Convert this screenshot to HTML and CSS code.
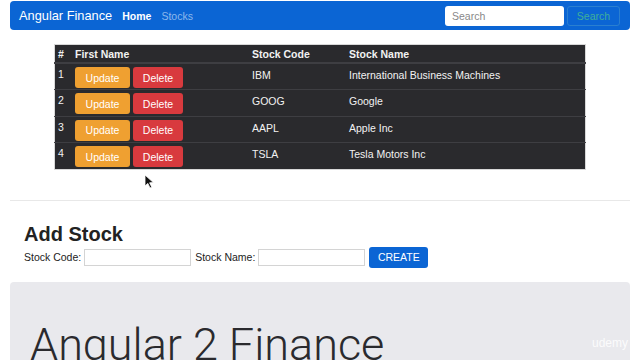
FILE: index.html
```html
<!DOCTYPE html>
<html>
  <head>
    <title>Angular Finance</title>
    <link rel="stylesheet" href="styles.css">
  </head>
  <body>
    <nav class="navbar">
      <a class="brand">Angular Finance</a>
      <a class="nav-link active">Home</a>
      <a class="nav-link">Stocks</a>
      <form class="search">
        <input class="search-input" type="text" placeholder="Search">
        <button class="search-btn" type="button">Search</button>
      </form>
    </nav>

    <div class="table-wrap">
      <table class="stocks">
        <thead>
          <tr>
            <th class="col-num">#</th>
            <th class="col-first">First Name</th>
            <th class="col-code">Stock Code</th>
            <th>Stock Name</th>
          </tr>
        </thead>
        <tbody>
          <tr>
            <td>1</td>
            <td><button class="btn btn-update">Update</button><button class="btn btn-delete">Delete</button></td>
            <td>IBM</td>
            <td>International Business Machines</td>
          </tr>
          <tr>
            <td>2</td>
            <td><button class="btn btn-update">Update</button><button class="btn btn-delete">Delete</button></td>
            <td>GOOG</td>
            <td>Google</td>
          </tr>
          <tr>
            <td>3</td>
            <td><button class="btn btn-update">Update</button><button class="btn btn-delete">Delete</button></td>
            <td>AAPL</td>
            <td>Apple Inc</td>
          </tr>
          <tr>
            <td>4</td>
            <td><button class="btn btn-update">Update</button><button class="btn btn-delete">Delete</button></td>
            <td>TSLA</td>
            <td>Tesla Motors Inc</td>
          </tr>
        </tbody>
      </table>
    </div>

    <hr class="divider">

    <section class="add-stock">
      <h2>Add Stock</h2>
      <form class="add-form">
        <label>Stock Code:</label>
        <input type="text">
        <label>Stock Name:</label>
        <input type="text">
        <button class="btn-create" type="button">CREATE</button>
      </form>
    </section>

    <div class="jumbotron">
      <h1>Angular 2 Finance</h1>
      <span class="watermark">udemy</span>
    </div>

    <svg class="cursor" width="12" height="16" viewBox="0 0 12 16">
      <path d="M1 1 L1 12 L3.8 9.4 L6 14 L7.8 13.2 L5.6 8.8 L9.4 8.6 Z" fill="#111" stroke="#fff" stroke-width="0.8"/>
    </svg>
  </body>
</html>
```
FILE: styles.css
```css
body {
  margin: 0;
  padding: 0 10px;
  font-family: "Liberation Sans", Arial, sans-serif;
  color: #222;
  background: #fff;
  overflow: hidden;
}

.navbar {
  display: flex;
  align-items: center;
  height: 29px;
  margin-top: 1px;
  padding: 0 10px 0 9px;
  background-color: #0b65d4;
  border-radius: 4px;
}
  .brand {
    color: #fff;
    font-size: 12.8px;
    margin-right: 10px;
  }
  .nav-link {
    color: #8cb8ec;
    font-size: 10.5px;
    margin-right: 10px;
  }
  .nav-link.active {
    color: #fff;
    font-weight: bold;
  }
  .search {
    display: flex;
    margin-left: auto;
  }
  .search-input {
    width: 119px;
    height: 20px;
    box-sizing: border-box;
    border: none;
    border-radius: 3px;
    padding: 0 7px;
    font-family: inherit;
    font-size: 10.5px;
    color: #333;
  }
  .search-input::placeholder {
    color: #888;
  }
  .search-btn {
    width: 53px;
    height: 20px;
    margin-left: 3px;
    box-sizing: border-box;
    background: transparent;
    border: 1px solid #2a7fd0;
    border-radius: 3px;
    color: #3fae9a;
    font-family: inherit;
    font-size: 10.5px;
  }

.table-wrap {
  width: 532px;
  margin: 14px auto 0;
}
  .stocks {
    width: 100%;
    table-layout: fixed;
    border-collapse: collapse;
    background-color: #2a2a2d;
    color: #f2f2f2;
    font-size: 10.5px;
    border: 1px solid #d8d8d8;
  }
  .stocks th {
    height: 17px;
    text-align: left;
    font-weight: bold;
    padding: 0 3px;
    border-bottom: 2px solid #3e3e42;
  }
  .stocks td {
    height: 26.5px;
    box-sizing: border-box;
    vertical-align: top;
    padding: 3px 3px 0;
    border-top: 1px solid #3e3e42;
  }
  .stocks td:first-child {
    padding-top: 4px;
  }
  .stocks td:nth-child(3),
  .stocks td:nth-child(4) {
    padding-top: 5px;
  }
  .col-num {
    width: 11px;
  }
  .col-first {
    width: 171px;
  }
  .col-code {
    width: 91px;
  }
  .btn {
    height: 21px;
    border: none;
    border-radius: 3px;
    color: #fff;
    font-family: inherit;
    font-size: 10.5px;
    vertical-align: top;
  }
  .btn-update {
    width: 55px;
    background-color: #efa031;
    margin-right: 3px;
  }
  .btn-delete {
    width: 50px;
    background-color: #d83a3e;
  }

.divider {
  margin: 30px 0 0;
  border: none;
  border-top: 1px solid #e8e8e8;
}

.add-stock {
  padding: 0 14px;
}
  .add-stock h2 {
    margin: 22px 0 1px;
    font-size: 20px;
    font-weight: bold;
    color: #222;
  }
  .add-form {
    display: flex;
    align-items: center;
    font-size: 10.5px;
  }
  .add-form label {
    margin-right: 3px;
  }
  .add-form input {
    width: 107px;
    height: 17px;
    box-sizing: border-box;
    border: 1px solid #d4d4d4;
    margin-right: 4px;
  }
  .btn-create {
    width: 59px;
    height: 21px;
    border: none;
    border-radius: 3px;
    background-color: #0b65d4;
    color: #fff;
    font-family: inherit;
    font-size: 10.5px;
  }

.jumbotron {
  position: relative;
  margin-top: 14px;
  height: 100px;
  padding: 0 20px;
  background-color: #e9e9ed;
  border-radius: 4px;
}
  .jumbotron h1 {
    margin: 0;
    padding-top: 36px;
    font-family: Roboto, "Liberation Sans", sans-serif;
    font-weight: 300;
    font-size: 45px;
    color: #2a2a2e;
  }
  .watermark {
    position: absolute;
    right: 2px;
    top: 54px;
    font-size: 12px;
    color: rgba(255, 255, 255, 0.85);
  }

.cursor {
  position: absolute;
  left: 144px;
  top: 174px;
}
```
